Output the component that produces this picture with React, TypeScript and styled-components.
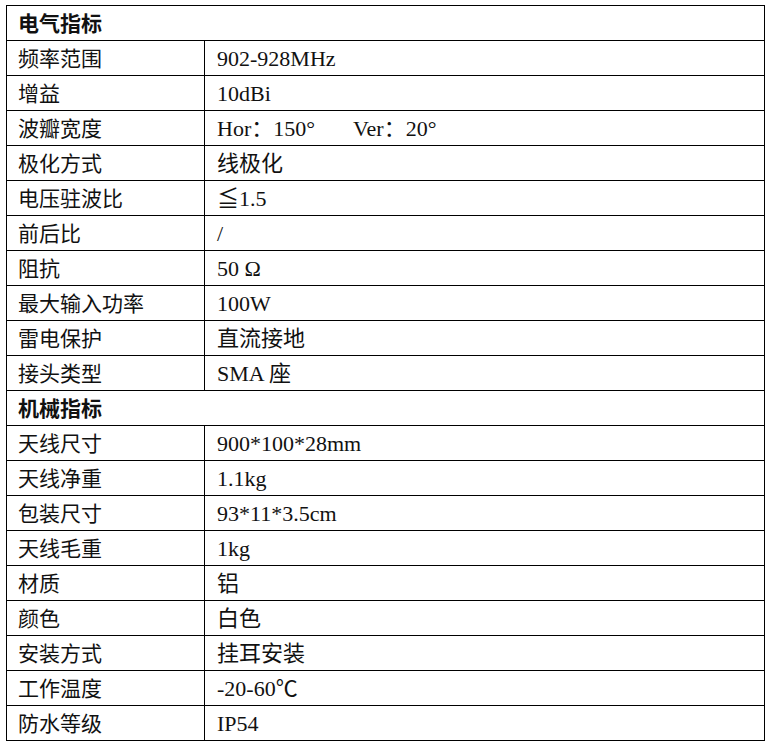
import React from 'react';
import styled, {createGlobalStyle} from 'styled-components';

const GlobalStyle=createGlobalStyle`
  body{
    margin: 0;
    background: #fff;
  }
`

const Wrapper=styled.div`
  padding: 5px 5px 0 6px;
`

const SpecTable=styled.table`
  width: 759px;
  border-collapse: collapse;
  table-layout: fixed;
  font-family: "Liberation Serif", "Noto Sans CJK SC", serif;
  font-size: 22px;
  color: #111;
  border: 1px solid #000;
  >colgroup>col.name{
    width: 198px;
  }
`

const Row=styled.tr`
  height: 35px;
`

const SectionCell=styled.td`
  border: 1px solid #000;
  padding: 2px 11px 0;
  font-weight: bold;
  height: 31px;
  line-height: 1;
  font-size: 21px;
`

const Cell=styled.td<{$value?: boolean}>`
  border: 1px solid #000;
  padding: 2px ${p=>p.$value ? '12px' : '11px'} 0;
  height: 31px;
  line-height: 1;
  white-space: pre;
  vertical-align: middle;
  font-size: ${p=>p.$value ? '22px' : '21px'};
`

type Section={title: string; rows: [string, string][]};

const sections: Section[]=[
  {
    title: '电气指标',
    rows: [
      ['频率范围', '902-928MHz'],
      ['增益', '10dBi'],
      ['波瓣宽度', 'Hor：150°       Ver：20°'],
      ['极化方式', '线极化'],
      ['电压驻波比', '≦1.5'],
      ['前后比', '/'],
      ['阻抗', '50 Ω'],
      ['最大输入功率', '100W'],
      ['雷电保护', '直流接地'],
      ['接头类型', 'SMA 座'],
    ],
  },
  {
    title: '机械指标',
    rows: [
      ['天线尺寸', '900*100*28mm'],
      ['天线净重', '1.1kg'],
      ['包装尺寸', '93*11*3.5cm'],
      ['天线毛重', '1kg'],
      ['材质', '铝'],
      ['颜色', '白色'],
      ['安装方式', '挂耳安装'],
      ['工作温度', '-20-60℃'],
      ['防水等级', 'IP54'],
    ],
  },
];

const App:React.FC=()=>{
  return (
    <Wrapper>
      <GlobalStyle/>
      <SpecTable>
        <colgroup>
          <col className='name'/>
          <col/>
        </colgroup>
        <tbody>
          {sections.map(s=>(
            <React.Fragment key={s.title}>
              <Row>
                <SectionCell colSpan={2}>{s.title}</SectionCell>
              </Row>
              {s.rows.map(([k, v])=>(
                <Row key={k}>
                  <Cell>{k}</Cell>
                  <Cell $value>{v}</Cell>
                </Row>
              ))}
            </React.Fragment>
          ))}
        </tbody>
      </SpecTable>
    </Wrapper>
  )
}

export default App;
